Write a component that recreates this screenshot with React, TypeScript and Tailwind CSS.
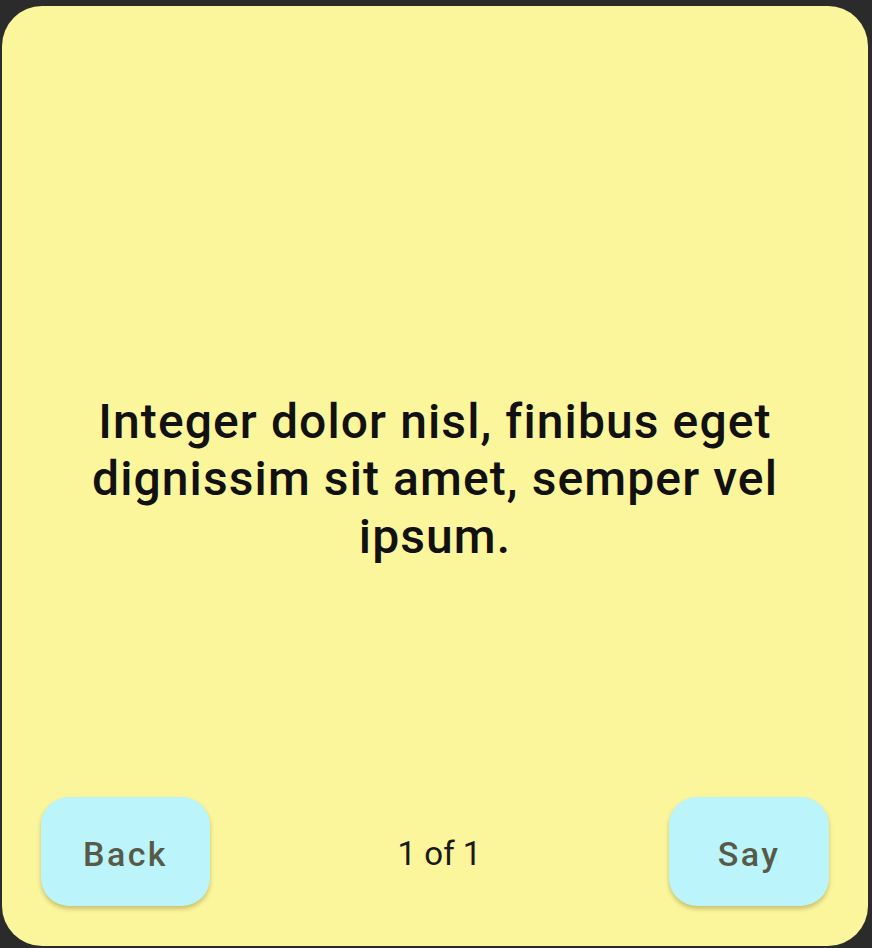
export default function App() {
  return (
    <div
      className="w-[872px] h-[948px] bg-[#2b2b2b] pt-[6px] pl-[2px] pr-[4px] pb-[2px]"
      style={{ fontFamily: 'Roboto, "Noto Sans", sans-serif' }}
    >
      <div className="h-full w-full rounded-[40px] bg-[#fbf59c] flex flex-col">
        <div className="flex-1 flex items-center justify-center pt-[155px] px-[40px]">
          <p className="text-center text-[48px] leading-[57.6px] font-medium tracking-[1.1px] text-[#111111]">
            Integer dolor nisl, finibus eget dignissim sit amet, semper vel ipsum.
          </p>
        </div>
        <div className="flex items-center justify-between px-[39px] pb-[40px]">
          <button className="w-[169px] h-[109px] pt-[5px] rounded-[28px] bg-[#bbf5fb] shadow-[0_3px_4px_rgba(90,80,0,0.3)] text-[34px] font-medium tracking-[2.4px] text-[#575a48]">
            Back
          </button>
          <div className="text-[33px] pt-[5px] text-[#1a1a1a]">1 of 1</div>
          <button className="w-[160px] h-[109px] pt-[5px] rounded-[28px] bg-[#bbf5fb] shadow-[0_3px_4px_rgba(90,80,0,0.3)] text-[34px] font-medium tracking-[2.4px] text-[#575a48]">
            Say
          </button>
        </div>
      </div>
    </div>
  );
}
